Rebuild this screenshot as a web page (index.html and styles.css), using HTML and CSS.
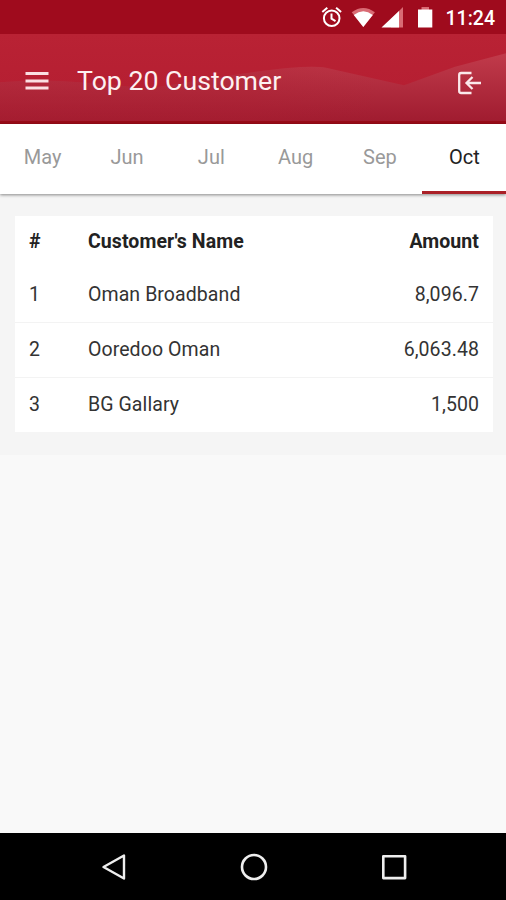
FILE: index.html
```
<!DOCTYPE html>
<html lang="en">
<head>
    <meta charset="UTF-8">
    <meta name="viewport" content="width=device-width, initial-scale=1.0">
    <title>Top 20 Customer</title>
    <link rel="stylesheet" href="styles.css">
</head>
<body>
    <div class="status-bar">
        <svg class="status-icons" width="124" height="34" viewBox="0 0 124 34">
            <!-- alarm -->
            <g fill="none" stroke="#fff" stroke-width="2">
                <circle cx="15.7" cy="18.2" r="7.8"/>
                <path d="M6.3 12l5-4.2M25.1 12l-5-4.2M15.5 13.5v5.2l4 2.4"/>
            </g>
            <!-- wifi -->
            <path fill="#d96b74" d="M35.7 12.2Q47.3 3.600 58.9 12.200L47.300 27z"/>
            <path fill="#fff" d="M37.800 15Q47.300 7.600 56.800 15L47.300 27z"/>
            <!-- signal -->
            <path fill="#d96b74" d="M87 7v20.500H75V19z"/>
            <path fill="#fff" d="M65.500 27.500L83 11v16.500z"/>
            <!-- battery -->
            <path fill="#d96b74" d="M105.500 7h7.500v3h-7.500z"/>
            <path fill="#fff" d="M102 9.500h14.300v18H102z"/>
        </svg>
        <span class="clock">11:24</span>
    </div>

    <header class="app-header">
        <svg class="hills" width="506" height="90" viewBox="0 0 506 90" preserveAspectRatio="none">
            <defs>
                <linearGradient id="hill" x1="0" y1="22" x2="0" y2="90" gradientUnits="userSpaceOnUse">
                    <stop offset="0" stop-color="#c03a4a"/>
                    <stop offset="1" stop-color="#a01c30"/>
                </linearGradient>
                <linearGradient id="fade" x1="0" y1="0" x2="1" y2="0">
                    <stop offset="0" stop-color="#b01d30" stop-opacity=".3"/>
                    <stop offset=".5" stop-color="#b01d30" stop-opacity=".25"/>
                    <stop offset=".75" stop-color="#b01d30" stop-opacity="0"/>
                </linearGradient>
            </defs>
            <path fill="url(#hill)" d="M0 50Q40 46 80 50L150 56L230 43Q305 31 326 35L404 53L455 34L506 20V90H0z"/>
            <path fill="url(#fade)" d="M0 50Q40 46 80 50L150 56L230 43Q305 31 326 35L404 53L455 34L506 20V90H0z"/>
        </svg>
        <button class="icon-btn menu" aria-label="Menu">
            <svg width="24" height="20" viewBox="0 0 24 20">
                <path stroke="#fbdfe2" stroke-width="3" d="M0.500 2.500h23M0.500 10h23M0.500 17h23"/>
            </svg>
        </button>
        <h1>Top 20 Customer</h1>
        <button class="icon-btn logout" aria-label="Log out">
            <svg width="24" height="24" viewBox="0 0 24 24" fill="none" stroke="#fbe9eb" stroke-width="2.300">
                <path d="M14.500 2H4.200Q2.200 2 2.200 4v16q0 2 2 2h10.300M24 12H10M15.500 6l-6 6 6 6"/>
            </svg>
        </button>
    </header>

    <nav class="tabs">
        <a class="tab">May</a>
        <a class="tab">Jun</a>
        <a class="tab">Jul</a>
        <a class="tab">Aug</a>
        <a class="tab">Sep</a>
        <a class="tab active">Oct</a>
    </nav>

    <main class="content">
        <table class="customers">
            <thead>
                <tr>
                    <th class="num">#</th>
                    <th>Customer's Name</th>
                    <th class="amount">Amount</th>
                </tr>
            </thead>
            <tbody>
                <tr>
                    <td class="num">1</td>
                    <td>Oman Broadband</td>
                    <td class="amount">8,096.7</td>
                </tr>
                <tr>
                    <td class="num">2</td>
                    <td>Ooredoo Oman</td>
                    <td class="amount">6,063.48</td>
                </tr>
                <tr>
                    <td class="num">3</td>
                    <td>BG Gallary</td>
                    <td class="amount">1,500</td>
                </tr>
            </tbody>
        </table>
    </main>

    <footer class="nav-bar">
        <svg width="28" height="28" viewBox="0 0 28 28" fill="none" stroke="#eee" stroke-width="2.400" stroke-linejoin="round">
            <path d="M3.500 14L24 2.500v23z"/>
        </svg>
        <svg width="28" height="28" viewBox="0 0 28 28" fill="none" stroke="#eee" stroke-width="2.600">
            <circle cx="14" cy="14" r="12"/>
        </svg>
        <svg width="28" height="28" viewBox="0 0 28 28" fill="none" stroke="#eee" stroke-width="2.600" stroke-linejoin="round">
            <path d="M3.300 3.300h21.800v21.800H3.300z"/>
        </svg>
    </footer>
</body>
</html>
```
FILE: styles.css
```
* {
    box-sizing: border-box;
}

body {
    font-family: Roboto, sans-serif;
    margin: 0;
    height: 900px;
    display: flex;
    flex-direction: column;
    background-color: #f9f9f9;
    color: #222;
}

.status-bar {
    height: 34px;
    display: flex;
    align-items: center;
    justify-content: flex-end;
    padding-right: 11px;
    background-color: #9f0b1d;
}

.status-icons {
    margin-right: 6px;
}

.clock {
    color: #fff;
    font-size: 19.5px;
    font-weight: 500;
    line-height: 34px;
    padding-top: 3px;
}

/* Header */
.app-header {
    position: relative;
    height: 90px;
    display: flex;
    align-items: center;
    padding: 6px 25px 0;
    background: linear-gradient(#b92234, #b41d31);
    border-bottom: 3px solid #990b18;
}

.hills {
    position: absolute;
    top: 0;
    left: 0;
    width: 100%;
    height: 100%;
}

.icon-btn {
    position: relative;
    display: flex;
    padding: 0;
    border: none;
    background: none;
    cursor: pointer;
}

.logout {
    margin: 5px 0 0 auto;
}

h1 {
    position: relative;
    margin: 1px 0 0 28px;
    color: #fdf0f1;
    font-size: 26.7px;
    font-weight: 400;
}

/* Month tabs */
.tabs {
    position: relative;
    display: flex;
    height: 70px;
    background-color: #fff;
    box-shadow: 0 1px 3px rgba(0,0,0,0.45);
}

.tab {
    flex: 1;
    padding: 4px 0 0 1px;
    text-align: center;
    font-size: 20px;
    line-height: 58px;
    color: #999;
}

.tab.active {
    color: #222;
    border-bottom: 3px solid #aa2027;
}

/* Customer list */
.content {
    padding: 22px 13px 23px 15px;
    background-color: #f5f5f5;
}

.customers {
    width: 100%;
    border-collapse: collapse;
    table-layout: fixed;
    background-color: #fff;
    font-size: 19.5px;
    letter-spacing: 0.08px;
}

th,
td {
    height: 55px;
    padding: 0;
    text-align: left;
    color: #333;
}

th {
    height: 51px;
    font-weight: 700;
    color: #222;
}

tr + tr td {
    border-top: 1px solid #f3f3f3;
}

.num {
    width: 73px;
    padding-left: 14px;
}

.amount {
    width: 150px;
    padding-right: 14px;
    text-align: right;
}

/* System navigation */
.nav-bar {
    height: 67px;
    margin-top: auto;
    padding-left: 1px;
    display: flex;
    align-items: center;
    justify-content: center;
    gap: 112px;
    background-color: #000;
}
```
